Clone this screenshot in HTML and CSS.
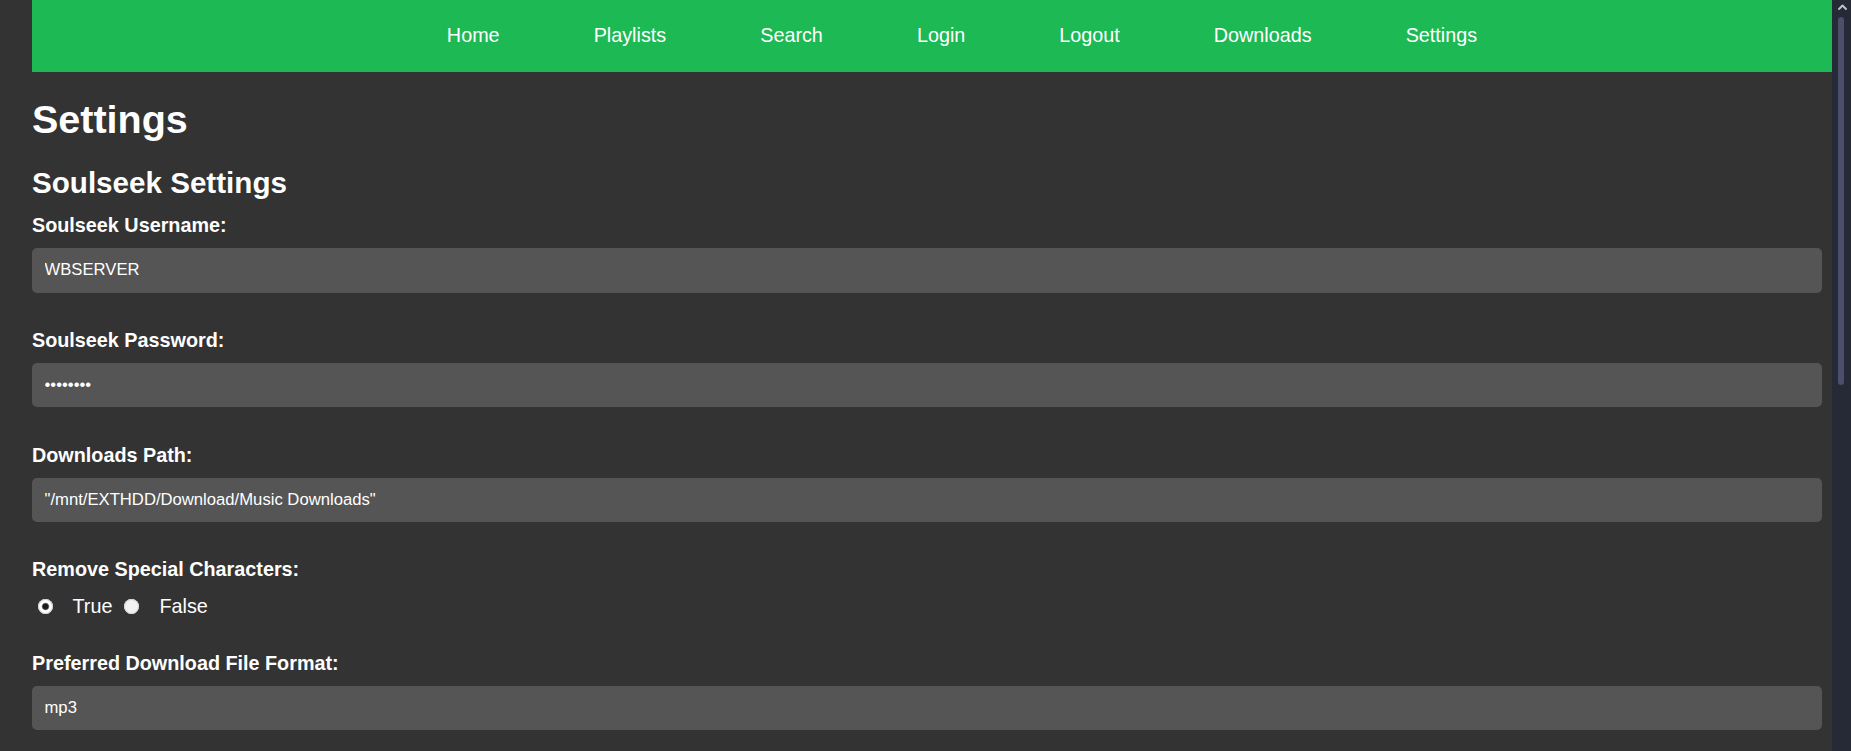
FILE: index.html
```html
<!DOCTYPE html>
<html lang="en">
<head>
<meta charset="utf-8">
<title>Settings</title>
<link rel="stylesheet" href="styles.css">
</head>
<body>
<div class="page">
  <main class="main">
    <nav class="navbar">
      <ul class="nav-list">
        <li><a href="#" class="nav-link">Home</a></li>
        <li><a href="#" class="nav-link">Playlists</a></li>
        <li><a href="#" class="nav-link">Search</a></li>
        <li><a href="#" class="nav-link">Login</a></li>
        <li><a href="#" class="nav-link">Logout</a></li>
        <li><a href="#" class="nav-link">Downloads</a></li>
        <li><a href="#" class="nav-link">Settings</a></li>
      </ul>
    </nav>
    <h1 class="title">Settings</h1>
    <h2 class="subtitle">Soulseek Settings</h2>
    <form class="form">
      <div class="field">
        <label class="field-label" for="user">Soulseek Username:</label>
        <input class="text-input" id="user" type="text" value="WBSERVER">
      </div>
      <div class="field">
        <label class="field-label" for="pass">Soulseek Password:</label>
        <input class="text-input" id="pass" type="password" value="password">
      </div>
      <div class="field">
        <label class="field-label" for="path">Downloads Path:</label>
        <input class="text-input" id="path" type="text" value="&quot;/mnt/EXTHDD/Download/Music Downloads&quot;">
      </div>
      <div class="field field-radio">
        <label class="field-label">Remove Special Characters:</label>
        <div class="radio-row">
          <input class="radio" type="radio" name="special" id="sp-true" checked>
          <label class="radio-label" for="sp-true">True</label>
          <input class="radio" type="radio" name="special" id="sp-false">
          <label class="radio-label" for="sp-false">False</label>
        </div>
      </div>
      <div class="field">
        <label class="field-label" for="fmt">Preferred Download File Format:</label>
        <input class="text-input" id="fmt" type="text" value="mp3">
      </div>
    </form>
  </main>
  <div class="scrollbar">
    <div class="scroll-arrow">
      <svg width="9" height="6" viewBox="0 0 9 6"><path d="M1 5 L4.5 1.5 L8 5" fill="none" stroke="#c3c5cf" stroke-width="1.8" stroke-linecap="round" stroke-linejoin="round"/></svg>
    </div>
    <div class="scroll-thumb"></div>
  </div>
</div>
</body>
</html>
```
FILE: styles.css
```css
html, body {
  margin: 0;
  padding: 0;
  height: 100%;
  overflow: hidden;
}
body {
  background: #333333;
  font-family: "Liberation Sans", Arial, sans-serif;
  color: #ffffff;
}
.page {
  display: flex;
  height: 751px;
}
.main {
  flex: 1;
  min-width: 0;
  padding-left: 32px;
  overflow: hidden;
}
.navbar {
  background: #1db954;
  height: 72px;
  box-sizing: border-box;
  padding-top: 24px;
}
.nav-list {
  list-style: none;
  margin: 0;
  padding: 0 0 0 60px;
  display: flex;
  justify-content: center;
  gap: 94px;
}
.nav-link {
  color: #ffffff;
  text-decoration: none;
  font-size: 19.8px;
  line-height: 23px;
  display: block;
}
.title {
  font-size: 39.5px;
  line-height: 45px;
  font-weight: bold;
  margin: 24.5px 0 0 0;
}
.subtitle {
  font-size: 29.6px;
  line-height: 34px;
  font-weight: bold;
  margin: 24.5px 0 14.3px 0;
}
.form {
  margin: 0;
}
.field {
  margin-bottom: 36.25px;
}
.field-label {
  display: block;
  font-size: 19.8px;
  line-height: 23px;
  font-weight: bold;
}
.text-input {
  display: block;
  box-sizing: border-box;
  width: calc(100% - 10px);
  height: 44.4px;
  margin-top: 11px;
  padding: 0 12.5px;
  border: none;
  border-radius: 5px;
  background: #555555;
  color: #ffffff;
  font-family: "Liberation Sans", Arial, sans-serif;
  font-size: 16.67px;
  outline: none;
}
.field-radio {
  margin-bottom: 33.3px;
}
.radio-row {
  display: flex;
  align-items: center;
  height: 23px;
  margin-top: 14px;
}
.radio {
  appearance: none;
  -webkit-appearance: none;
  width: 15px;
  height: 15px;
  margin: 0 0 0 12px;
  border-radius: 50%;
  background: #f2f2f2;
  box-shadow: inset 0 0 0 1px #d6d6d6;
  flex: none;
}
.radio:first-child {
  margin-left: 5.5px;
}
.radio:checked {
  background: radial-gradient(circle, #1a1a1a 0 2.6px, #6a6a6a 3.2px, #ffffff 4.2px);
  box-shadow: inset 0 0 0 1px #cfcfcf;
}
.radio-label {
  font-size: 19.8px;
  line-height: 23px;
  margin-left: 20px;
}
.scrollbar {
  width: 19px;
  flex: none;
  background: #262a37;
  display: flex;
  flex-direction: column;
  align-items: center;
}
.scroll-arrow {
  height: 17px;
  box-sizing: border-box;
  padding-top: 4px;
  padding-left: 1px;
}
.scroll-arrow svg {
  display: block;
}
.scroll-thumb {
  width: 6px;
  height: 368px;
  border-radius: 3px;
  background: #4b4f6b;
  margin-left: -1px;
}
```
